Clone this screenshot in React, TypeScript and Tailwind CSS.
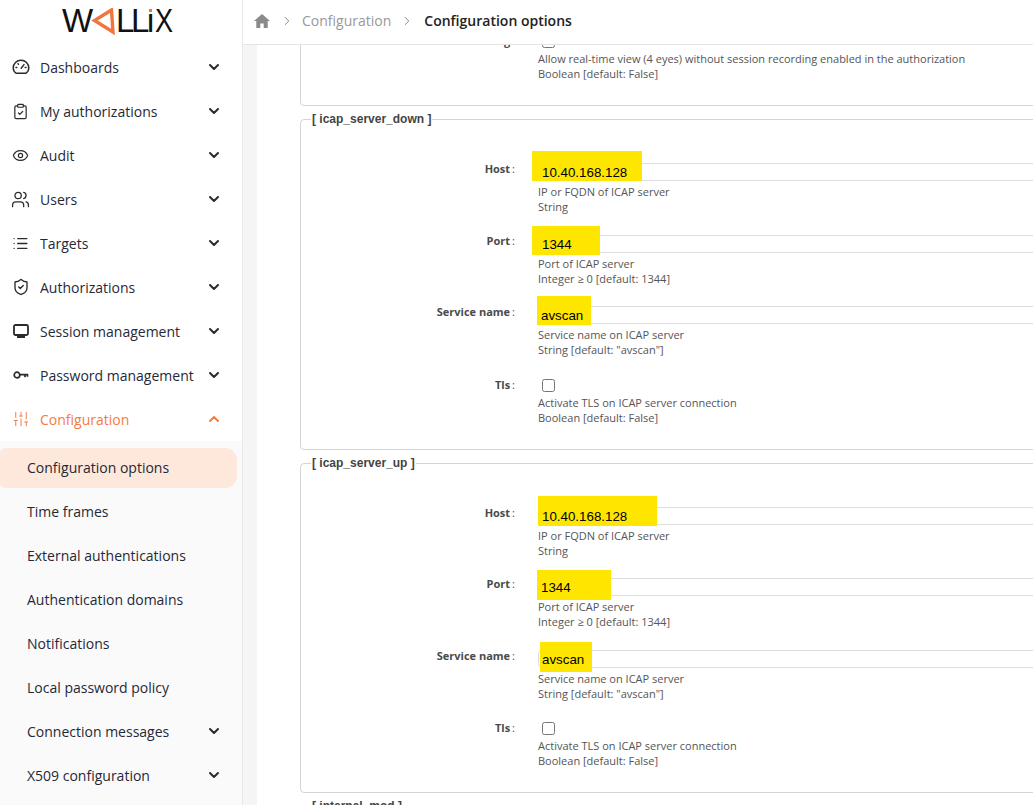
import { ChevronDown, ChevronUp, ChevronRight, ClipboardCheck, Eye, Users, List, ShieldCheck, SlidersVertical } from "lucide-react";
import type { ReactNode } from "react";

const sans = "font-['Open_Sans',sans-serif]";

function GaugeIcon() {
  return (
    <svg width="18" height="16" viewBox="0 0 18 16" fill="none" stroke="currentColor" strokeWidth="1.500" strokeLinecap="round">
      <path d="M4 14.200C2.200 13 1.200 11 1.200 8.800 1.200 4.600 4.700 1.200 9 1.200s7.800 3.400 7.800 7.600c0 2.200-1 4.200-2.800 5.400Z" />
      <path d="M9.200 9.200 12 5.600M4 8.500h.8M6 4.800l.5.500M14 8.500h-.8" />
    </svg>
  );
}
function MonitorIcon() {
  return (
    <svg width="16" height="15" viewBox="0 0 16 15" fill="none">
      <rect x="1" y="1" width="14" height="10" rx="1.500" stroke="currentColor" strokeWidth="1.800" />
      <path d="M4 11.500h8v2.500H4z" fill="currentColor" />
    </svg>
  );
}
function KeyIcon() {
  return (
    <svg width="16" height="10" viewBox="0 0 16 10" fill="none" stroke="currentColor" strokeWidth="1.700">
      <circle cx="4" cy="5" r="2.800" />
      <path d="M6.800 4.700H15.200M12 4.700v2.500M14.500 4.700v2" />
    </svg>
  );
}
function HomeIcon() {
  return (
    <svg width="16" height="14" viewBox="0 0 16 14" fill="#8a8a8a">
      <path d="M8 0 0 7h2.300v7h4v-4.600h3.400V14h4V7H16z" />
    </svg>
  );
}

function Logo() {
  return (
    <div className="flex h-[44px] items-start pl-[62px] pt-[3px] font-['Liberation_Sans',sans-serif] text-[33px] leading-[36px] text-[#111]">
      <span className="w-[30px]">W</span>
      <svg width="25" height="28" viewBox="0 0 25 28" fill="none" className="mt-[5px] -ml-px">
        <path d="M20.500 2 3.500 12.500 22 24Z" stroke="#f0763c" strokeWidth="3.400" strokeLinejoin="miter" />
      </svg>
      <span className="w-[15px]">L</span>
      <span className="w-[15px]">L</span>
      <span className="relative w-[9px]">
        ı
        <span className="absolute left-[2.500px] top-[6px] h-[3px] w-[3px] bg-[#f0763c]" />
      </span>
      <span className="w-[18px] origin-left scale-x-[0.82]">X</span>
    </div>
  );
}

function NavItem({ icon, label, open }: { icon: ReactNode; label: string; open?: boolean }) {
  const color = open ? "text-[#f37b45]" : "text-[#1f2937]";
  return (
    <div className={`flex h-[44px] items-center ${color}`}>
      <span className={`flex w-[40px] shrink-0 justify-center pl-[1px] ${open ? "text-[#f37b45]" : "text-[#2b2b2b]"}`}>{icon}</span>
      <span className="flex-1 whitespace-nowrap text-[14px]">{label}</span>
      <span className={`mr-[20px] ${open ? "text-[#f37b45]" : "text-[#2b2b2b]"}`}>
        {open ? <ChevronUp size={16} strokeWidth={3} /> : <ChevronDown size={16} strokeWidth={3} />}
      </span>
    </div>
  );
}

function SubItem({ label, active, more }: { label: string; active?: boolean; more?: boolean }) {
  return (
    <div className="flex h-[44px] items-center">
      <div className={`flex h-[40px] w-[237px] items-center rounded-r-xl rounded-l-md pl-[27px] ${active ? "bg-[#fde8db]" : ""}`}>
        <span className="flex-1 whitespace-nowrap pb-[2px] text-[14px] text-[#1f2937]">{label}</span>
        {more && (
          <span className="mr-[15px] pb-[2px] text-[#2b2b2b]">
            <ChevronDown size={16} strokeWidth={3} />
          </span>
        )}
      </div>
    </div>
  );
}

function Sidebar() {
  return (
    <aside className="flex h-[805px] w-[243px] shrink-0 flex-col overflow-hidden border-r border-[#e8e8e8] bg-white">
      <Logo />
      <div className="h-[1px] shrink-0" />
      <NavItem icon={<GaugeIcon />} label="Dashboards" />
      <NavItem icon={<ClipboardCheck size={17} strokeWidth={1.700} />} label="My authorizations" />
      <NavItem icon={<Eye size={17} strokeWidth={1.700} />} label="Audit" />
      <NavItem icon={<Users size={19} strokeWidth={1.600} />} label="Users" />
      <NavItem icon={<List size={17} strokeWidth={1.800} />} label="Targets" />
      <NavItem icon={<ShieldCheck size={18} strokeWidth={1.800} />} label="Authorizations" />
      <NavItem icon={<MonitorIcon />} label="Session management" />
      <NavItem icon={<KeyIcon />} label="Password management" />
      <NavItem icon={<SlidersVertical size={18} strokeWidth={1.300} />} label="Configuration" open />
      <div className="flex-1 bg-[#fafafa] pt-[5px]">
        <SubItem label="Configuration options" active />
        <SubItem label="Time frames" />
        <SubItem label="External authentications" />
        <SubItem label="Authentication domains" />
        <SubItem label="Notifications" />
        <SubItem label="Local password policy" />
        <SubItem label="Connection messages" more />
        <SubItem label="X509 configuration" more />
      </div>
    </aside>
  );
}

function Help({ a, b }: { a: string; b: string }) {
  return (
    <div className="mt-[3px] whitespace-nowrap text-[11px] leading-[15px] text-[#555]">
      <div>{a}</div>
      <div>{b}</div>
    </div>
  );
}

function Label({ text }: { text: string }) {
  return (
    <div className="-mt-[1px] h-[14px] w-[215px] shrink-0 whitespace-nowrap pr-[1px] text-right text-[11px] font-bold leading-[14px] text-[#4a4a4a]">
      {text}
      <span className="ml-[2px] font-normal">:</span>
    </div>
  );
}

function TextRow(p: { label: string; value: string; a: string; b: string; height: string; mark: string; pad: string }) {
  return (
    <div className={`flex ${p.height}`}>
      <Label text={p.label} />
      <div className="ml-[22px] w-[600px] shrink-0">
        <div className="relative h-[18px] rounded-l-[4px] border border-[#dedede]">
          <span className={`absolute bg-[#ffe600] ${p.mark}`} />
          <span className={`relative block h-[16px] font-['Liberation_Sans',sans-serif] text-[13.330px] leading-[18px] text-black ${p.pad}`}>{p.value}</span>
        </div>
        <Help a={p.a} b={p.b} />
      </div>
    </div>
  );
}

function CheckRow({ label, a, b, height }: { label: string; a: string; b: string; height: string }) {
  return (
    <div className={`flex ${height}`}>
      <Label text={label} />
      <div className="ml-[22px] w-[600px] shrink-0">
        <input type="checkbox" className="ml-[4px] block h-[13px] w-[13px]" readOnly />
        <Help a={a} b={b} />
      </div>
    </div>
  );
}

function Group(p: { title: string; box: string; host: string; port: string; svc: string; hp: string; pp: string; sp: string; h1: string; h2: string; h3: string }) {
  return (
    <fieldset className={`mb-[6px] w-[800px] rounded-[4px] border border-[#d4d4d4] ${p.box}`}>
      <legend className="ml-[10px] whitespace-nowrap px-[1px] font-['Liberation_Sans',sans-serif] text-[12px] font-bold leading-[14px] text-[#444]">
        [ {p.title} ]
      </legend>
      <div className="pt-[37px]">
        <TextRow label="Host" value="10.40.168.128" a="IP or FQDN of ICAP server" b="String" height={p.h1} mark={p.host} pad={p.hp} />
        <TextRow label="Port" value="1344" a="Port of ICAP server" b="Integer ≥ 0 [default: 1344]" height={p.h2} mark={p.port} pad={p.pp} />
        <TextRow label="Service name" value="avscan" a="Service name on ICAP server" b='String [default: "avscan"]' height={p.h3} mark={p.svc} pad={p.sp} />
        <CheckRow label="Tls" a="Activate TLS on ICAP server connection" b="Boolean [default: False]" height="h-[60px]" />
      </div>
    </fieldset>
  );
}

function Content() {
  return (
    <div className="flex-1 overflow-hidden">
      <div className="h-full overflow-hidden border-l-[14px] border-[#f5f5f5] bg-white pl-[43px]">
        <div className="-mt-[80px]">
          <fieldset className="mb-[6px] h-[141px] w-[800px] rounded-[4px] border border-[#d4d4d4]">
            <div className="pt-[69px]">
              <CheckRow label="Allow real-time viewing" a="Allow real-time view (4 eyes) without session recording enabled in the authorization" b="Boolean [default: False]" height="h-[60px]" />
            </div>
          </fieldset>
          <Group
            title="icap_server_down"
            box="h-[338px]"
            host="-left-[7px] -top-[13px] h-[30px] w-[110px]"
            port="-left-[7px] -top-[10px] h-[29px] w-[68px]"
            svc="-left-[2px] -top-[11px] h-[29px] w-[54px]"
            hp="pl-[3px]"
            pp="pl-[3px]"
            sp="pl-[2px]"
            h1="h-[72px]"
            h2="h-[71px]"
            h3="h-[73px]"
          />
          <Group
            title="icap_server_up"
            box="h-[337px]"
            host="-left-[1px] -top-[12px] h-[30px] w-[119px]"
            port="-left-[2px] -top-[9px] h-[30px] w-[74px]"
            svc="left-[1px] -top-[9px] h-[30px] w-[52px]"
            hp="pl-[3px]"
            pp="pl-[2px]"
            sp="pl-[3px]"
            h1="h-[71px]"
            h2="h-[72px]"
            h3="h-[72px]"
          />
          <fieldset className="h-[60px] w-[800px] rounded-[4px] border border-[#d4d4d4]">
            <legend className="ml-[10px] whitespace-nowrap px-[1px] font-['Liberation_Sans',sans-serif] text-[12px] font-bold leading-[14px] text-[#444]">
              [ internal_mod ]
            </legend>
          </fieldset>
        </div>
      </div>
    </div>
  );
}

export default function App() {
  return (
    <div className={`flex h-[805px] w-[1033px] overflow-hidden bg-white ${sans}`}>
      <Sidebar />
      <main className="flex min-w-0 flex-1 flex-col">
        <header className="flex h-[45px] shrink-0 items-center border-b border-[#e5e5e5] bg-white pb-[3px] pl-[11px] text-[14px]">
          <HomeIcon />
          <ChevronRight size={14} strokeWidth={1.500} className="ml-[10px] text-[#777]" />
          <span className="ml-[8px] text-[#999]">Configuration</span>
          <ChevronRight size={14} strokeWidth={1.500} className="ml-[9px] text-[#777]" />
          <span className="ml-[10px] font-semibold text-[#222]">Configuration options</span>
        </header>
        <Content />
      </main>
    </div>
  );
}
